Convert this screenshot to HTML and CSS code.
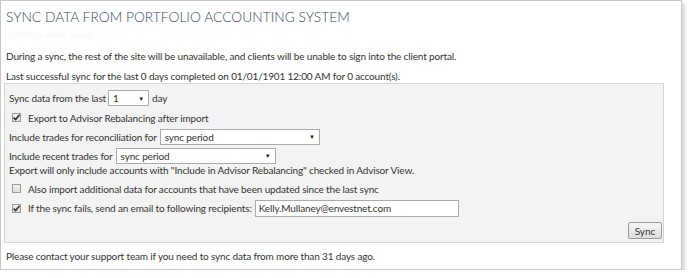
FILE: index.html
```html
<!DOCTYPE html>
<html lang="en">
<head>
    <meta charset="UTF-8">
    <title>Sync Data</title>
    <link rel="stylesheet" href="styles.css">
</head>
<body>

    <div class="frame">
        <h1 class="title">SYNC DATA FROM PORTFOLIO ACCOUNTING SYSTEM</h1>
        <div class="ghost">Settings were saved.</div>

        <p class="line first">During a sync, the rest of the site will be unavailable, and clients will be unable to sign into the client portal.</p>
        <p class="line last-sync">Last successful sync for the last 0 days completed on 01/01/1901 12:00 AM for 0 account(s).</p>

        <!-- options panel -->
        <div class="panel">
            <div class="row row-days">
                <span>Sync data from the last</span>
                <div class="select sel-days"><span>1</span><span class="arrow">&#9660;</span></div>
                <span>day</span>
            </div>
            <div class="row row-check">
                <span class="check checked"><svg viewBox="0 0 9 9" width="9" height="9"><path d="M1.6 4.6 L3.6 6.6 L7.6 1.8" fill="none" stroke="#333" stroke-width="1.6"/></svg></span>
                <span>Export to Advisor Rebalancing after import</span>
            </div>
            <div class="row row-recon">
                <span>Include trades for reconciliation for</span>
                <div class="select sel-period"><span>sync period</span><span class="arrow">&#9660;</span></div>
            </div>
            <div class="row row-recent">
                <span>Include recent trades for</span>
                <div class="select sel-period"><span>sync period</span><span class="arrow">&#9660;</span></div>
            </div>
            <div class="note">Export will only include accounts with "Include in Advisor Rebalancing" checked in Advisor View.</div>
            <div class="row row-check row-also">
                <span class="check"></span>
                <span>Also import additional data for accounts that have been updated since the last sync</span>
            </div>
            <div class="row row-check row-mail">
                <span class="check checked"><svg viewBox="0 0 9 9" width="9" height="9"><path d="M1.6 4.6 L3.6 6.6 L7.6 1.8" fill="none" stroke="#333" stroke-width="1.6"/></svg></span>
                <span>If the sync fails, send an email to following recipients:</span>
                <div class="input">Kelly.Mullaney@envestnet.com</div>
            </div>
            <div class="actions">
                <button class="btn">Sync</button>
            </div>
        </div>

        <p class="line contact">Please contact your support team if you need to sync data from more than 31 days ago.</p>
    </div>

</body>
</html>
```

FILE: styles.css
```css
body {
    margin: 0;
    font-family: 'Lato', 'Open Sans', Arial, sans-serif;
    font-size: 10px;
    letter-spacing: -0.15px;
    color: #333;
    background: #fff;
}

.frame {
    width: 682px;
    height: 270px;
    border: 1px solid #c8c8c8;
    box-shadow: 3px 3px 3px rgba(0, 0, 0, 0.15);
    padding-left: 3px;
    box-sizing: border-box;
}

.title {
    margin: 6px 0 0 2px;
    font-size: 13.8px;
    font-weight: 300;
    letter-spacing: 0;
    line-height: 20px;
    color: #34495e;
}

.ghost {
    margin-left: 5px;
    height: 14px;
    line-height: 14px;
    color: #f8f8f8;
}

.line {
    margin: 0 0 0 2px;
    height: 14px;
    line-height: 14px;
}
.first { margin-top: 8px; }
.last-sync { margin-top: 6px; }
.contact { margin-top: 6px; }

.panel {
    width: 660px;
    height: 160px;
    box-sizing: border-box;
    background: #f3f3f3;
    border: 1px solid #d4d4d4;
    padding: 4px 1px 0 4px;
}

.row {
    display: flex;
    align-items: center;
    gap: 3px;
    height: 19px;
}
.row-days { height: 20px; }
.row-check { gap: 7px; padding-left: 3px; }
.row-also { margin-top: 3px; }
.row-mail { height: 20px; }
.row-mail .input { margin-left: -4px; }

.note {
    height: 11px;
    line-height: 11px;
}

.select {
    display: flex;
    align-items: center;
    height: 16px;
    box-sizing: border-box;
    background: #fff;
    border: 1px solid #ababab;
    padding: 0 4px;
}
.select .arrow {
    margin-left: auto;
    font-size: 6px;
    color: #222;
}
.sel-days { width: 41px; margin-left: -1px; }
.sel-period { width: 160px; }

.check {
    display: inline-block;
    width: 9px;
    height: 9px;
    box-sizing: border-box;
    border: 1px solid #9a9a9a;
    background: linear-gradient(#f4f4f4, #dcdcdc);
    position: relative;
}
.check svg {
    position: absolute;
    left: -1px;
    top: -1px;
}

.input {
    width: 204px;
    height: 17px;
    line-height: 15px;
    box-sizing: border-box;
    background: #fff;
    border: 1px solid #ababab;
    padding: 0 3px;
}

.actions {
    display: flex;
    justify-content: flex-end;
    margin-top: 4px;
}

.btn {
    width: 34px;
    height: 17px;
    padding: 0;
    font-family: inherit;
    font-size: 10px;
    color: #333;
    background: linear-gradient(#f6f6f6, #dedede);
    border: 1px solid #9c9c9c;
    border-radius: 2px;
}
```
